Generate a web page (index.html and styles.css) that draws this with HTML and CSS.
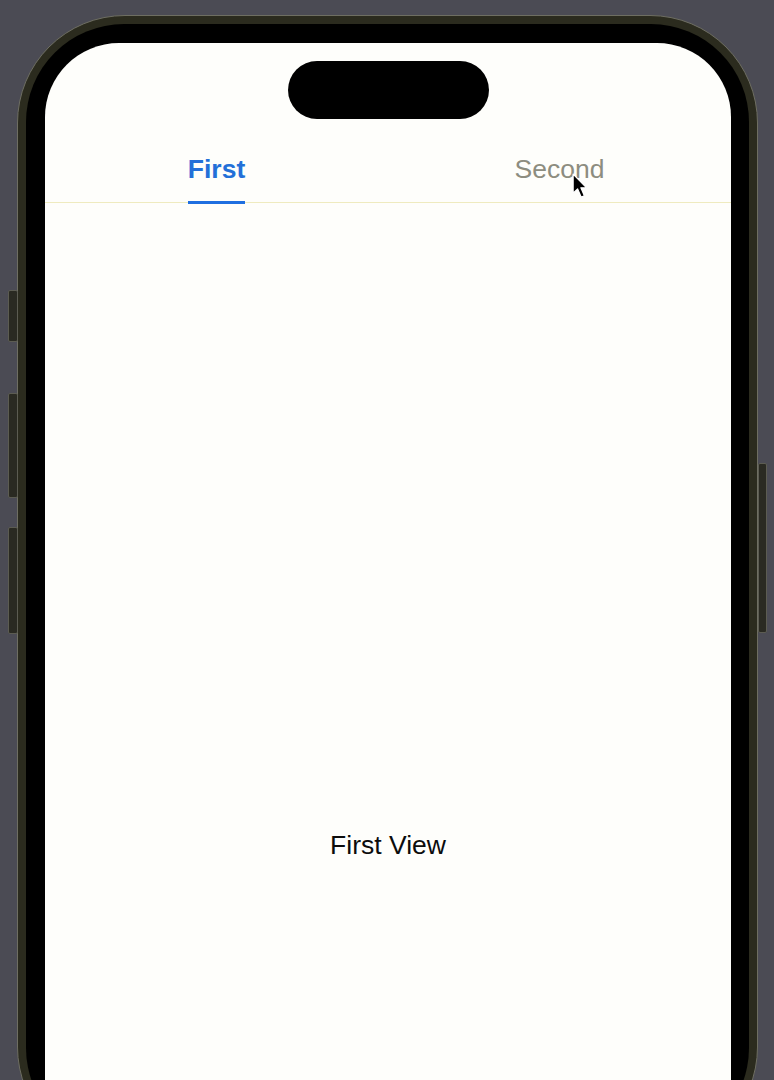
FILE: index.html
```html
<!DOCTYPE html>
<html lang="en">
<head>
<meta charset="utf-8">
<title>Tabs</title>
<link rel="stylesheet" href="styles.css">
</head>
<body>
  <div class="phone">
    <span class="btn btn-action"></span>
    <span class="btn btn-vol-up"></span>
    <span class="btn btn-vol-down"></span>
    <span class="btn btn-power"></span>
    <div class="bezel">
      <div class="screen">
        <div class="island"></div>
        <nav class="tabs">
          <div class="tab active"><span class="tab-label">First</span><span class="tab-line"></span></div>
          <div class="tab"><span class="tab-label">Second</span><span class="tab-line"></span></div>
        </nav>
        <main class="content">
          <p class="view-label">First View</p>
        </main>
        <svg class="cursor" width="18" height="27" viewBox="0 0 16 24">
          <path d="M1 1 L1 18 L5 14.2 L8.2 21.5 L11 20.3 L7.9 13.2 L13 13.2 Z" fill="#000" stroke="#fff" stroke-width="1.1" stroke-linejoin="round"/>
        </svg>
      </div>
    </div>
  </div>
</body>
</html>
```

FILE: styles.css
```css
html, body {
  margin: 0;
  padding: 0;
  height: 100%;
}
body {
  background: #4b4b54;
  overflow: hidden;
  font-family: "Liberation Sans", Arial, sans-serif;
  padding: 15px 0 0 17px;
  box-sizing: border-box;
}
.phone {
  position: relative;
  width: 741px;
  height: 1140px;
  box-sizing: border-box;
  border-radius: 108px;
  background: #2b2b1e;
  border: 1px solid #6e6e62;
  padding: 8px;
}
.btn {
  position: absolute;
  background: #2a2a22;
  border: 1px solid #5c5c52;
  box-sizing: border-box;
  border-radius: 2px;
}
.btn-action { left: -10px; top: 274px; width: 10px; height: 52px; }
.btn-vol-up { left: -10px; top: 377px; width: 10px; height: 105px; }
.btn-vol-down { left: -10px; top: 511px; width: 10px; height: 107px; }
.btn-power { left: 740px; top: 447px; width: 9px; height: 170px; }
.bezel {
  height: 100%;
  box-sizing: border-box;
  background: #000;
  border-radius: 98px;
  padding: 19px 18px 0 19px;
}
.screen {
  position: relative;
  height: 100%;
  background: #fefefb;
  border-radius: 74px 74px 0 0;
  overflow: hidden;
  display: flex;
  flex-direction: column;
}
.island {
  align-self: center;
  margin-top: 18px;
  width: 201px;
  height: 58px;
  border-radius: 29px;
  background: #000;
  flex: none;
}
.tabs {
  margin-top: 24px;
  display: grid;
  grid-template-columns: 1fr 1fr;
  border-bottom: 1px solid #efebbf;
}
.tab {
  display: flex;
  flex-direction: column;
  align-items: center;
  padding-top: 11px;
}
.tab-label {
  font-size: 26.5px;
  line-height: 30px;
  color: #8d8d80;
}
.tab-line {
  display: block;
  margin-top: 17px;
  margin-bottom: -2px;
  height: 3px;
  width: 100%;
  position: relative;
}
.tab.active .tab-label {
  color: #2370d8;
  font-weight: 600;
}
.tab.active .tab-line {
  width: 57px;
  background: #1f6fe0;
}
.tab:not(.active) .tab-line {
  visibility: hidden;
  width: 0;
}
.content {
  flex: 1;
  display: flex;
  justify-content: center;
  padding-top: 627px;
}
.view-label {
  margin: 0;
  font-size: 26.5px;
  line-height: 30px;
  color: #0c0c0c;
}
.cursor {
  position: absolute;
  left: 527px;
  top: 130px;
}
```
